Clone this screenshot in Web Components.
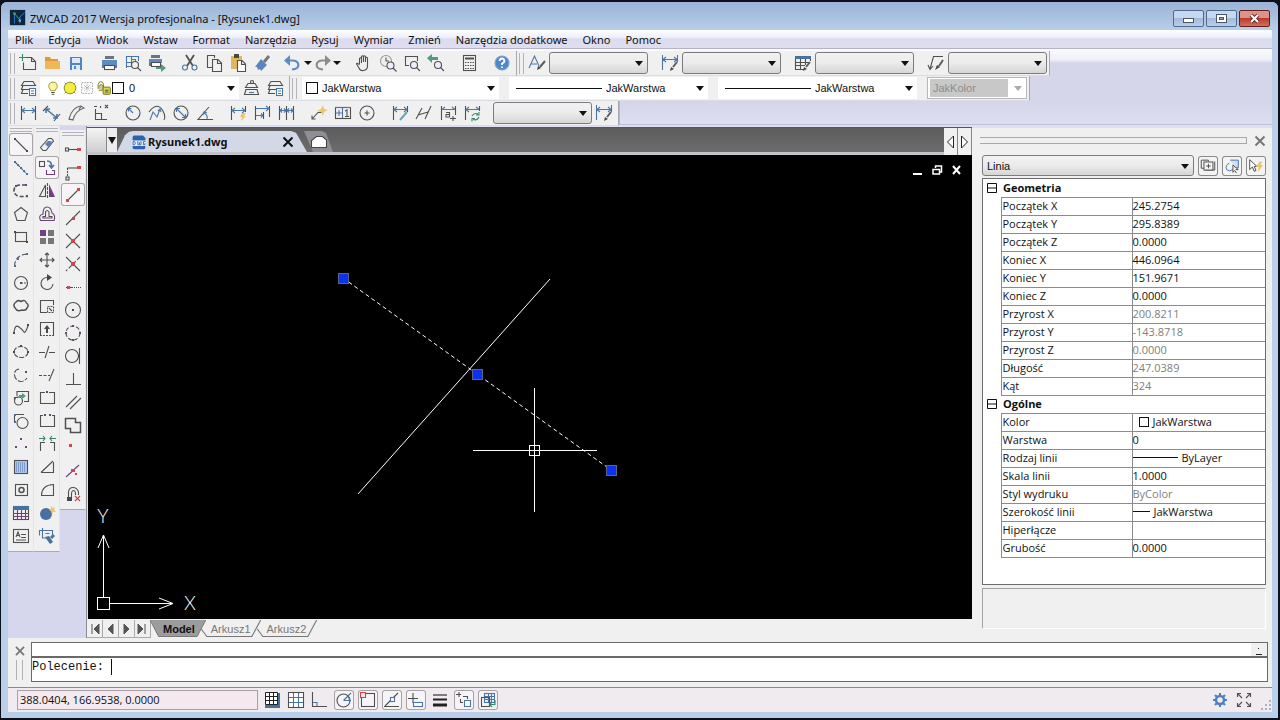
<!DOCTYPE html>
<html lang="pl">
<head>
<meta charset="utf-8">
<title>ZWCAD 2017</title>
<style>
  html, body { margin: 0; background: #10101c; }
  body { font: 12px/16px "Open Sans", "Noto Sans", sans-serif; color: #111; }
</style>
</head>
<body>
<cad-app></cad-app>
<script>
const ICONS = {
  logo: '<rect x="1" y="1" width="17" height="17" fill="#10243c" stroke="none"/><path d="M6 16V5M12 16V9L17 4" stroke="#2b78d0"/><path d="M6 5l6 7" stroke="#2fae8a"/><circle cx="6" cy="5" r="1.5" class="fg n"/><circle cx="12" cy="13" r="1.5" fill="#58a8f0" class="n"/>',
  new: '<path d="M5.500 9.500V16.500H17.500V8.500L13.500 4.500H8M13.500 4.500V8.500H17.500"/><path class="g" d="M1 4.500H8M4.500 1V8"/>',
  open: '<path class="n" fill="#dd9b35" d="M3 4h5l1 2h7v2H3z"/><path class="n" fill="#f0b75a" d="M3 8h15v8H3z"/>',
  save: '<path class="n" fill="#4f86c0" d="M4 4h11l1 1v12H4z"/><path class="n" fill="#dce9f6" d="M6 5h8v5H6zM6 12h8v5H6z"/><path class="n" fill="#4f86c0" d="M8 13h2v3H8z"/>',
  print: '<path class="n" fill="#6c7480" d="M6 3h9v3H6zM3 11h15v4h-2v-3H5v3H3z"/><path class="n" fill="#5b8cc4" d="M3 7h15v5H3z"/><rect x="5.500" y="12.500" width="10" height="4" fill="#fff"/>',
  preview: '<path class="b" d="M3.500 15V3.500H15.500V8M3.500 9.500H8M8.500 3V13.500H3.500M8.500 6.500H12.500V8"/><circle cx="12" cy="12" r="3.500"/><path d="M14.500 14.500L18 18"/>',
  publish: '<path class="n" fill="#5b8cc4" d="M2 6h13v4H2z"/><path class="n" fill="#6c7480" d="M4 2h9v3H4zM2 10h2v3H2z"/><rect x="4.500" y="9.500" width="9" height="4" fill="#fff"/><path class="n fg" d="M9 14h5v-3l5 4-5 4v-3H9z"/>',
  cut: '<path d="M6 2L13 13M14 2L7 13" stroke-width="1.800"/><circle class="b" cx="5" cy="14.500" r="2.500"/><circle class="b" cx="14.500" cy="14.500" r="2.500"/>',
  copy: '<path d="M8 14.500H3.500V2.500H10.500V5"/><path d="M8.500 6.500H14L17.500 10V18.500H8.500zM13.500 7V10.500H17"/>',
  paste: '<path class="n" fill="#e6b45c" d="M3 3h11v4H9v9H3z"/><path class="n fd" d="M6 1h5v4H6z"/><path d="M9.500 7.500H14L17.500 11V18.500H9.500zM13.500 8V11.500H17" fill="#fff"/>',
  brush: '<path d="M17 3L12 9" stroke-width="3" stroke="#777"/><path class="n" fill="#5b86bd" d="M9 6l6 6-6 6-1-2-2 1-1-3-2 0z"/>',
  undo: '<path d="M9 16.500C18 16 17 7 9 7.500H5" stroke="#5b8cc4" stroke-width="2.200"/><path class="n" fill="#5b8cc4" d="M1 7.500L7 2v11z"/>',
  redo: '<path d="M11 16.500C2 16 3 7 11 7.500H15" stroke="#8c8c8c" stroke-width="2.200"/><path class="n" fill="#8c8c8c" d="M19 7.500L13 2v11z"/>',
  hand: '<path d="M5.500 11V5.500q1-1.500 2 0V10 3.500q1-1.500 2 0V9 3.500q1-1.500 2 0V9 5q1-1.500 2 0V13q0 4-4 4.500Q6 18 5 15L2.500 11Q3 9 5.500 12"/>',
  zoomrt: '<circle cx="8" cy="8" r="5.500" stroke="#999"/><path d="M8 4.500V8H11"/><circle cx="12.500" cy="12.500" r="3.500" fill="#eef"/><path d="M15 15L18.500 18.500"/>',
  zoomwin: '<path d="M7 12.500H3.500V3.500H15.500V8"/><circle cx="12" cy="12" r="3.500" fill="#eef"/><path d="M14.500 14.500L18 18"/>',
  zoomprev: '<path class="n fg" d="M1 5l5-4v3h6v3H6v3z"/><circle cx="12" cy="12" r="3.500" fill="#eef"/><path d="M14.500 14.500L18 18"/>',
  calc: '<rect x="4.500" y="2.500" width="12" height="15"/><path d="M6 5.500H15" stroke-width="2"/><path d="M6 9.500H15M6 12.500H15M6 15.500H15" stroke-dasharray="1.500 1"/>',
  help: '<circle cx="10" cy="10" r="7" fill="#4f86c6" stroke="#7aa4d6"/><path d="M7.500 8Q8 5.500 10 5.500T12.500 8Q12.500 9.500 10 10.500V12M10 13.500V15" stroke="#fff" stroke-width="1.800"/>',
  tstyle: '<path class="b" d="M2 15L7.500 3L12 13M4 11H10"/><path class="k" d="M18 8L13 14"/><path class="n fd" d="M10 17l1-4 3 2z"/>',
  dstyle: '<path class="b" d="M2.500 2V17M17.500 2V9M3 6.500H17M6 4L3 6.500L6 9M14 4L17 6.500L14 9"/><path class="k" d="M17 9L13 14"/><path class="n fd" d="M10 18l1-4 3 2z"/>',
  tbstyle: '<path class="n fb" d="M2 3h16v3H2z"/><path d="M2.500 6V16.500H11M7.500 6V16M12.500 6V12M2 9.500H16M2 12.500H12M17.500 6V8"/><path class="k" d="M17 9L13 14"/><path class="n fd" d="M10 18l1-4 3 2z"/>',
  mlstyle: '<path d="M17 3.500H7.500L4 16M2 12L4 16.500L7 13"/><path class="k" d="M17 7L13 13"/><path class="n fd" d="M9 17l2-5 3 2z"/>',
  layers: '<path d="M6 3.500H15L17.500 7.500H3.500zM11 11.500H3.500L5 7.500M10 15.500H3.500L5 11.500"/><rect class="b" x="11.500" y="10.500" width="6" height="7" fill="#fff"/><path class="b" d="M13 13H16M13 15.500H16"/>',
  bulb: '<path d="M7.500 13Q7 11 5.500 9.500Q4.500 3.500 10 3.500T14.500 9.500Q13 11 12.500 13z" fill="#fbf6a0" stroke="#a89a3a"/><path d="M8 15H12M8.500 17H11.500"/>',
  sun: '<path d="M4 4L16 16M16 4L4 16" stroke="#8899aa"/><circle cx="10" cy="10" r="6.500" fill="#f2ee3a" stroke="#8c8c2a"/>',
  freeze: '<rect x="4" y="4" width="12" height="12" stroke="#aaa" stroke-dasharray="2 1"/><path d="M10 5V15M5 10H15M6.500 6.500L13.500 13.500M13.500 6.500L6.500 13.500" stroke="#999" stroke-dasharray="1 1"/>',
  lock: '<rect x="9" y="9" width="8" height="8" rx="1" fill="#dada3e" stroke="#77771a"/><path d="M3.500 11V6Q4 3 6.500 3T9.500 6V9M5.500 11V6.500L8 6.500V12.500H4" stroke="#77771a"/><path d="M11 12.500H15M11 14.500H15"/>',
  lmake: '<path d="M7 5.500H14L16.500 9.500H4.500zM5 11.500L3.500 16.500H17.500L16 11.500z"/><path class="b" d="M8 14.500H13"/><circle cx="11" cy="4" r="1.500"/>',
  linear: '<path d="M3.500 3V17M17.500 3V17"/><path class="b" d="M4 7.500H17M7 5L4 7.500L7 10M14 5L17 7.500L14 10"/>',
  aligned: '<path d="M1 8L6 3M12 18L18 11"/><path class="b" d="M4 6L15 15M4 10V6H8M11 15H15V11" stroke-width="1.600"/>',
  arclen: '<path d="M3 16Q6 4 15 3L18 5Q9 8 7 17zM3 16.500H7M15 3L13 7" stroke="#666"/>',
  ordinate: '<path d="M5.500 6V16.500H17M5.500 10.500H11.500V16"/><path d="M4 3.500H7M15 2L18 5M18 2L15 5M10.500 3V5"/>',
  radius: '<circle cx="10" cy="10" r="7"/><path class="b" d="M10 10L5.500 5.500M5.500 8.500V5.500H8.500"/>',
  jog: '<path d="M2 9Q10-2 16 8Q19 14 17 17"/><path class="b" d="M3 17L6 9L10 14L13 6M11 8L13 6L14 9"/>',
  diameter: '<circle cx="10" cy="10" r="7"/><path class="b" d="M5.500 5.500L14.500 14.500M5.500 9V5.500H9M11 14.500H14.500V11"/>',
  angular: '<path d="M14 4L3 16.500H18"/><path class="b" d="M9 10Q13 12 12 16M8 12L9 9L12 10"/>',
  quick: '<path d="M3.500 3V17M17.500 3V9"/><path class="b" d="M4 7.500H17M7 5L4 7.500L7 10M14 5L17 7.500L14 10"/><path class="n fo" d="M14 10h4l-2 3h2l-5 5 1-4h-2z"/>',
  baseline: '<path d="M3.500 3V17M17.500 3V14M11.500 9V16"/><path class="b" d="M4 5.500H17M14 3L17 5.500L14 8M4 12.500H11M9 10.500L11 12.500L9 14.500"/>',
  cont: '<path d="M3.500 3V17M10.500 3V17M17.500 3V17"/><path class="b" d="M4 7.500H17M6 5.500L4 7.500L6 9.500M8 5.500L10 7.500L8 9.500M13 5.500L11 7.500L13 9.500M15 5.500L17 7.500L15 9.500"/>',
  leader: '<path d="M3 16L9 9.500H13M3 12.500V16H6.500"/><path class="n fo" d="M14 2l1 4 4 1-4 2-1 4-2-4-4-1 4-2z"/>',
  tol: '<rect x="2.500" y="4.500" width="15" height="11"/><path class="b" d="M9.500 5V15M3 10H9M6 7V13"/><path d="M12 8L14 7V13.500M12 13.500H16"/><path class="b" d="M2 4.500H18"/>',
  center: '<circle cx="10" cy="10" r="7"/><path d="M10 7.500V12.500M7.500 10H12.500"/>',
  dedit: '<path d="M3.500 3V17M17.500 3V9"/><path class="b" d="M4 6.500H17M7 4L4 6.500L7 9M14 4L17 6.500L14 9"/><path d="M17 9L10 17" stroke="#6aa6b6" stroke-width="2"/>',
  oblique: '<path d="M2 16L8 5M11 16L17 3M4 12L14 9"/>',
  dtext: '<path d="M3.500 3V17M17.500 3V12"/><path class="b" d="M4 6.500H17M7 4L4 6.500M14 4L17 6.500"/><path d="M8 9.500H11.500V14H8V11.500H11M12 15.500H18M15 13V18"/>',
  dupd: '<path d="M3.500 3V17M17.500 3V8"/><path class="b" d="M4 6.500H17M7 4L4 6.500L7 9M14 4L17 6.500"/><path class="g" d="M10 13Q12 9.500 16 11M17 9V12H14M17 14Q15 18 11 16.500M10 18.500V15.500H13"/>',
  line: '<path d="M4 4L16 16"/><path class="n fd" d="M3 3h2v2H3zM15 15h2v2h-2z"/>',
  xline: '<path d="M4 4L16 16" stroke-dasharray="3 1"/><path class="n fb" d="M3 3h2v2H3zM6 6h2v2H6zM9 9h2v2H9zM12 12h2v2h-2zM15 15h2v2h-2z"/>',
  pline: '<path d="M15 4H8Q3 5 3 9.500T8 15.500H17" stroke-dasharray="4 2" stroke-width="1.600"/><path class="n fp" d="M14 3h2v2h-2zM15 14h2v2h-2zM4 4h2v2H4z"/>',
  polygon: '<path d="M10 3.500L16.500 8.500L14 16.500H6L3.500 8.500z"/>',
  rect: '<rect x="4.500" y="5.500" width="11" height="9"/><path class="n fd" d="M3 4h2v2H3zM15 14h2v2h-2z"/>',
  arc: '<path d="M3.500 16Q4 5 16 4" stroke-dasharray="5 2"/><path class="n fb" d="M3 15h2v2H3zM6 8h2v2H6zM15 3h2v2h-2z"/>',
  circle: '<circle cx="10" cy="10" r="6.500"/><path d="M10 10H17" stroke-dasharray="2 1"/><path class="n fp" d="M9 9h2v2H9z"/>',
  cloud: '<path d="M5 6Q7 3.500 10 5.500Q14 3 15.500 7Q18.500 9 16 12Q15 15 11 14Q6 16 4.500 12.500Q1 9 5 6z" stroke-width="1.500"/>',
  spline: '<path d="M3 13Q4 5 8 8T13 13T17 7"/><path class="n fd" d="M2 13h2v2H2zM16 5h2v2h-2z"/>',
  ellipse: '<ellipse cx="10" cy="10" rx="7" ry="5.500" stroke-dasharray="5 1.500"/><path class="n fd" d="M9 3h2v2H9zM2 9h2v2H2zM16 9h2v2h-2z"/>',
  earc: '<path d="M8 4Q3 5 3.500 10T9 16.500Q13 17 16 13" stroke-dasharray="6 1.500"/><path class="n fp" d="M14 6h2v2h-2z"/>',
  insert: '<path d="M6 8V3.500H17.500V13.500H13M3.500 12V9.500H7"/><circle cx="7.500" cy="13" r="4"/><path class="n fg" d="M8 7h3V5l4 3-4 3V9H8z"/>',
  block: '<path d="M3.500 11V3.500H13"/><circle cx="11.500" cy="12" r="5.500"/><path class="n fb" d="M3 3h2v2H3zM3 10h2v2H3z"/>',
  point: '<path class="n fp" d="M9 4h2v2H9zM4 12h2v2H4zM14 12h2v2h-2z"/>',
  hatch: '<rect x="3.500" y="3.500" width="13" height="13" fill="#b4c6f0"/><path class="b" d="M5 6H15M5 8H15M5 10H15M5 12H15M5 14H15" stroke-dasharray="1 1"/>',
  region: '<rect x="4.500" y="4.500" width="12" height="11"/><circle cx="10.500" cy="10" r="2.500" stroke-width="1.500"/>',
  table: '<rect x="2.500" y="3.500" width="15" height="13"/><path class="n fb" d="M2 3h16v4H2z"/><path class="p" d="M3 10.500H17M3 13.500H17M6.500 7V16M10.500 7V16M14.500 7V16"/>',
  mtext: '<rect x="2.500" y="3.500" width="15" height="13"/><path d="M5 11L7 6L9 11M5.500 9.500H8.500M10 8.500H15M10 11.500H15M5 14H15"/>',
  erase: '<path d="M3.500 12.500L11.500 3.500H14.500L16.500 6L9 15.500H6z"/><path class="n" fill="#5b7fc4" d="M11 6h3l1 2-4 4-3-3z"/>',
  copyo: '<rect x="2.500" y="3.500" width="5" height="5"/><path class="b" d="M10 3Q15 3 14.500 9M12 7L14.500 10L17 7" stroke-width="1.700"/><path class="p" d="M9.500 12V16.500H17.500V12.500H15"/>',
  mirror: '<path d="M8.500 4V15.500H2.500z"/><path class="n fp" d="M12 3v13h6z"/><path d="M10.500 2V18" stroke-dasharray="3 1"/>',
  offset: '<path class="p" d="M3.500 16.500Q1 11 6 10Q6 3 10 3T15 9Q19 11 17 16.500z"/><path d="M6 14V12.500H8.500V8Q10 5 12 8V12.500H15V14z"/>',
  array: '<path class="n fp" d="M3 3h6v6H3z"/><path class="n" fill="#777" d="M11 3h6v6h-6zM3 11h6v6H3zM11 11h6v6h-6z"/>',
  move: '<path d="M10 3V17M3 10H17M8 5L10 3L12 5M8 15L10 17L12 15M5 8L3 10L5 12M15 8L17 10L15 12"/>',
  rotate: '<path d="M10.500 4.500A6 6 0 1 0 16 11"/><path class="n fd" d="M10 1v7l5-3.500z"/>',
  scale: '<path d="M10 16.500H3.500V4.500H16.500V9"/><path d="M10.500 10.500H16.500V16.500H10.500z" stroke-dasharray="2 1"/><path d="M12 12L15 15"/>',
  stretch: '<path d="M3.500 16V3.500H16.500V16"/><path d="M3 16.500H17" stroke-dasharray="2 1"/><path class="n fd" d="M10 6l3 4h-2v4H9v-4H7z"/>',
  trim: '<path d="M12 4L8 16M2 10.500H8M12 10.500H18"/>',
  extend: '<path d="M17 4L12 16"/><path d="M2 10.500H13" stroke-dasharray="3 1.500"/>',
  breakp: '<path d="M8 4.500H3.500V15.500H17.500V4.500H12"/><path class="n fp" d="M9 3h2v2H9z"/>',
  break: '<path d="M6 4.500H3.500V15.500H17.500V4.500H15"/><path class="n fp" d="M7 3h2v2H7zM12 3h2v2h-2z"/>',
  join: '<path d="M3.500 17V8.500H8M17.500 17V8.500H13"/><path class="g" d="M2 4.500H8M6 2L8 4.500L6 7M19 4.500H13M15 2L13 4.500L15 7"/>',
  chamfer: '<path d="M4 15.500H16.500V5M4 15.500L16 4"/>',
  fillet: '<path d="M4 15.500H16.500V4.500Q5 5 4.500 15"/>',
  explode: '<circle cx="9" cy="11" r="6" class="fb n"/><path class="n fo" d="M14 3l2 2 2-1-1 3 2 2-3 0-1 3-1-4-2-1 2-1z"/>',
  matchp: '<path class="b" d="M5.500 2V12H10M2.500 4.500H15.500V9M2.500 4V9.500M8.500 7.500H12.500"/><path class="b" d="M17 9L14 12" stroke-width="3"/><path class="n fb" d="M8 11l4-1 4 6-3 2z"/>',
  s_from: '<path d="M5 10.500H15"/><rect x="2.500" y="9" width="3" height="3"/><path class="n fr" d="M14 9h4v3h-4z"/>',
  s_track: '<path d="M4.500 6H14"/><path d="M4.500 6V15" stroke-dasharray="2 1"/><rect x="3" y="15" width="3" height="3"/><path class="n fr" d="M14 4h4v3h-4z"/>',
  s_end: '<path d="M4 16L16 4"/><path class="n fr" d="M3 14h3v3H3zM14 3h3v3h-3z"/>',
  s_mid: '<path d="M3 17L17 3"/><path class="n fr" d="M9 9h3v3H9z"/>',
  s_int: '<path d="M3 3L17 17M17 3L3 17"/><path class="n fr" d="M8 8h4v4H8z"/>',
  s_app: '<path d="M3 3L17 17"/><path d="M17 3L3 17" stroke-dasharray="4 2"/><path class="n fr" d="M8 8h4v4H8z"/>',
  s_ext: '<path d="M3 10.500H9"/><path d="M9 10.500H18" stroke-dasharray="1 1"/><path class="n fr" d="M4 9h3v3H4z"/>',
  s_cen: '<circle cx="10" cy="10" r="7.500"/><path class="n fd" d="M9 9h2v2H9z"/>',
  s_quad: '<circle cx="10" cy="10" r="7" stroke-dasharray="4 2"/><path class="n fp" d="M9 2h2v2H9zM9 16h2v2H9zM2 9h2v2H2zM16 9h2v2h-2z"/>',
  s_tan: '<circle cx="9" cy="10" r="6.500"/><path d="M16.500 2V18"/><path class="n fd" d="M15 9h2v2h-2z"/>',
  s_perp: '<path d="M10.500 4V15.500M3 15.500H18"/>',
  s_par: '<path d="M3 15L14 4M7 17L18 6"/>',
  s_ins: '<path d="M2.500 3.500H12.500V7.500H17.500V17.500H7.500V13.500H2.500z" stroke-width="1.500"/>',
  s_node: '<path class="n fr" d="M6 6h3v3H6z"/>',
  s_near: '<path class="p" d="M3 16L16 4"/><path class="n fr" d="M8 8h4v3H8zM12 12h2v2h-2z"/>',
  s_none: '<path d="M5.500 15V8Q6 3.500 10 3.500T15.500 8V11M8.500 15V9Q9 6.500 10.500 6.500T12.500 9V11"/><path class="n fd" d="M4 13h5v4H4z"/><path class="r" d="M12 12L17 17M17 12L12 17"/>',
  snap: '<path class="n fb" d="M3 3h15v15H3z"/><path class="n" fill="#fff" d="M3 2h12v13H3z"/><path d="M3 6.500H15M3 10.500H15M7.500 3V15M11.500 3V15M3.500 2.500H15.500V14.500H3.500z" stroke-width="1" stroke="#222"/>',
  grid: '<rect x="2.500" y="2.500" width="15" height="15" fill="#fff"/><path class="b" d="M3 7.500H17M3 12.500H17M7.500 3V17M12.500 3V17"/>',
  ortho: '<path d="M2.500 2V16.500H17"/><path class="b" d="M3 12.500H7V16"/>',
  polar: '<circle cx="9.500" cy="10.500" r="6.500"/><path class="b" d="M9.500 10.500L17 3M10 10.500H17M14 7Q16 8 15 10"/>',
  osnap: '<rect x="3.500" y="3.500" width="13" height="13"/><path class="r" d="M2.500 2.500H7.500V7.500H2.500z" fill="#f3eef2"/>',
  otrack: '<path d="M2 16.500H17M3 16L16 3"/><rect class="b" x="8.500" y="7.500" width="4" height="4" fill="#fff"/>',
  dyn: '<path d="M7 3V13M2 8.500H12"/><rect class="b" x="7.500" y="12.500" width="9" height="4" fill="#fff"/>',
  lwt: '<path d="M3 5H17" stroke="#222"/><path d="M3 9.500H17" stroke="#222" stroke-width="2"/><path d="M3 15H17" stroke="#222" stroke-width="3"/>',
  cycle: '<path d="M5 2V7M2 4.500H7M6.500 9V12.500H9M9 6.500H13.500V9"/><rect class="b" x="10.500" y="10.500" width="6" height="6" fill="#fff"/>',
  anno: '<rect class="b" x="6.500" y="3.500" width="10" height="9"/><path class="b" d="M7 6.500H16M7 9.500H16M10.500 4V12M13.500 4V12"/><rect x="3.500" y="7.500" width="8" height="9"/><path class="g" d="M17 10V14.500H12M14 12L11.500 14.500L14 17"/>',
  gear: '<circle cx="10" cy="10" r="4" stroke="#4f80bd" stroke-width="2.500"/><path d="M10 3V5.500M10 14.500V17M3 10H5.500M14.500 10H17M5 5L7 7M13 13L15 15M15 5L13 7M7 13L5 15" stroke="#4f80bd" stroke-width="2"/>',
  full: '<path d="M3.500 7V3.500H7M13 3.500H16.500V7M16.500 13V16.500H13M7 16.500H3.500V13M4 4L8 8M16 4L12 8M16 16L12 12M4 16L8 12"/>',
  pick: '<path d="M6 12.500H2.500V3.500H10.500V5M17.500 5V14.500H7"/><rect x="5.500" y="5.500" width="10" height="9" fill="#f4f4f4"/><path d="M10.500 7.500V12.500M8 10H13"/>',
  selobj: '<path class="b" d="M8 3.500H17V12H13" fill="#cfe0f8"/><path class="b" d="M7 7Q2 9 4 14Q7 17 11 14"/><path d="M11 9V17L13 15L15 18M11 9L17 14H14" fill="#fff"/>',
  qsel: '<path d="M3 3V14L6 11L8 16L10 15L8 10.500H11z" fill="#fff"/><path class="n fo" d="M14 5h3l-2 4h3l-6 8 1-6h-3z"/>',
  dwg: '<path class="n" fill="#2d62ae" d="M3 2h12l3 3v12q0 2-2 2H4q-2 0-2-2V4q0-2 2-2z"/><path class="n" fill="#e8f0fb" d="M1 8h18v7H1z"/><path d="M2.500 9.500V13.500H4.500Q6.500 11.500 4.500 9.500zM8.500 9V13.500H12.500V9M10.500 10V13M18 9.500H15.500V13.500H17.500V11.500" stroke="#2d62ae"/>',
  doc: '<path d="M2.500 15.500V8.500L7.500 4.500H13.500L17.500 8V15.500z" fill="#fff" stroke="#444"/>',
  cross: '<path d="M5.500 5.500L14.500 14.500M14.500 5.500L5.500 14.500" stroke-width="2" stroke="currentColor"/>'
};

function define(name, html, setup) {
  const tpl = document.createElement('template');
  tpl.innerHTML = html;
  customElements.define(name, class extends HTMLElement {
    constructor() {
      super();
      this.attachShadow({ mode: 'open' }).append(tpl.content.cloneNode(true));
    }
    connectedCallback() { if (setup && !this.ready) { this.ready = true; setup.call(this, this.shadowRoot); } }
  });
}

customElements.define('cad-icon', class extends HTMLElement {
  static observedAttributes = ['name'];
  constructor() {
    super();
    this.attachShadow({ mode: 'open' }).innerHTML = `<style>
      :host { display: block; width: 20px; height: 20px; flex: none; }
      svg { display: block; width: 100%; height: 100%; fill: none; stroke: #505050; stroke-width: 1.1; }
      .b { stroke: #4a76a6; } .g { stroke: #2f8a68; } .p { stroke: #70407c; } .r { stroke: #d04048; }
      .k { stroke: #5c5c5c; stroke-width: 2; } .n { stroke: none; }
      .fb { fill: #47719f; } .fg { fill: #4f9c80; } .fp { fill: #743f80; } .fr { fill: #d2454f; } .fd { fill: #484848; } .fo { fill: #efc46a; }
    </style><svg viewBox="0 0 20 20" aria-hidden="true"></svg>`;
  }
  attributeChangedCallback(attr, old, value) {
    this.shadowRoot.querySelector('svg').innerHTML = ICONS[value] || '';
  }
});

define('tool-button', `<style>
  :host { display: block; width: 24px; height: 23px; flex: none; }
  :host([narrow]) { width: 20px; }
  button { display: grid; place-items: center; box-sizing: border-box; width: 100%; height: 100%; padding: 0; border: 0; border-radius: 3px; background: none; }
  :host([pressed]) button { box-shadow: inset 0 0 0 1px #a9a3a6; background: #f6f4f6; }
  :host([raised]) button { box-shadow: inset 0 0 0 1px #8a8a8a; background: #f4f4f4; }
  :host([raised]) cad-icon { width: 18px; height: 18px; }
</style><button type="button"><cad-icon></cad-icon></button>`, function (root) {
  root.querySelector('cad-icon').setAttribute('name', this.getAttribute('icon'));
  root.querySelector('button').setAttribute('aria-label', this.getAttribute('icon'));
});

define('caret-button', `<style>
  :host { display: block; width: 9px; height: 23px; flex: none; }
  button { display: grid; place-items: center; width: 100%; height: 100%; padding: 0; border: 0; background: none; }
  i { border: 4px solid transparent; border-top-color: #111; border-bottom: 0; }
</style><button type="button" aria-label="Lista"><i></i></button>`);

define('tool-gap', `<style>:host { display: block; width: 9px; flex: none; } :host([s]) { width: 2px; } :host([l]) { width: 10px; }</style>`);

define('tool-bar', `<style>
  :host { display: flex; align-items: center; box-sizing: border-box; flex: none; height: 25px; padding: 0 2px; background: #f0f0f0; border-right: 1px solid #a8a8b0; border-bottom: 1px solid #dcdce4; }
  .grip { width: 3px; height: 21px; margin-right: 1px; border: solid #b4b4b8; border-width: 0 1px; flex: none; }
  :host([vertical]) { flex-direction: column; height: auto; padding: 0 0 4px; align-self: flex-start; border-bottom-color: #a8a8b0; flex: 1 1 0; border-right-color: #e4e4ec; }
  :host([vertical]) .grip { width: 22px; height: 2px; margin: 2px 0 1px; border-width: 1px 0; }
</style><div class="grip"></div><slot></slot>`);

define('combo-box', `<style>
  :host { display: flex; position: relative; align-items: center; box-sizing: border-box; width: 99px; height: 22px; flex: none; font: 11px/16px "Liberation Sans", Arial, sans-serif; background: #fff; }
  :host([kind=button]) { border: 1px solid #7c7c7c; border-radius: 3px; background: linear-gradient(#f2f2f2, #ebebeb 50%, #d6d6d6); }
  :host([kind=off]) { border: 1px solid #b8b8b8; color: #8c8c8c; }
  .lead { display: flex; align-items: center; flex: none; padding-left: 4px; }
  select { appearance: none; flex: 1; min-width: 0; align-self: stretch; border: 0; padding: 0 18px 0 0; background: none; color: inherit; font: inherit; }
  :host([kind=off]) select { opacity: 1; background: #c8c8c8; margin: 1px 18px 1px 2px; padding-left: 3px; }
  :host([kind=off]) .lead { display: none; }
  .arrow { position: absolute; right: 4px; top: 50%; margin-top: -2px; border: 4px solid transparent; border-top: 5px solid #111; border-bottom: 0; pointer-events: none; }
  :host([kind=off]) .arrow { border-top-color: #aaa; }
</style><span class="lead"><slot></slot></span><select><option></option></select><i class="arrow"></i>`, function (root) {
  const s = root.querySelector('select');
  s.options[0].textContent = this.getAttribute('value') || '';
  s.setAttribute('aria-label', this.getAttribute('label') || 'Styl');
  s.disabled = this.getAttribute('kind') === 'off';
});

define('color-swatch', `<style>:host { display: inline-block; box-sizing: border-box; width: 12px; height: 12px; flex: none; margin: 0 4px; border: 1px solid #111; background: #fff; } :host([small]) { width: 10px; height: 10px; }</style>`);

define('title-bar', `<style>
  :host { display: flex; align-items: center; height: 28px; padding: 0 3px 0 2px; background: linear-gradient(#9cb3d6, #a7c1de 50%, #b8cfeb); }
  cad-icon { width: 18px; height: 18px; margin-top: 4px; }
  h1 { flex: 1; margin: 5px 0 0 3px; font: 11px/16px "Noto Sans", sans-serif; }
  button { display: grid; place-items: center; box-sizing: border-box; width: 31px; height: 17px; margin: 5px 0 0 2px; padding: 0; border: 1px solid #51698f; border-radius: 2px; background: linear-gradient(#c6d8ef 50%, #a2b9d8 50%, #b9d0ec); }
  .close { border-color: #6b1c1c; background: linear-gradient(#dd9488 50%, #bd3a2a 50%, #d07060); }
  svg { display: block; }
</style><cad-icon name="logo"></cad-icon><h1>ZWCAD 2017 Wersja profesjonalna - [Rysunek1.dwg]</h1>
<button type="button" aria-label="Minimalizuj"><svg width="13" height="11"><rect x="1.500" y="5.500" width="10" height="4" fill="#fff" stroke="#4c5568"/></svg></button>
<button type="button" aria-label="Przywróć"><svg width="13" height="11"><rect x="1.500" y="1.500" width="10" height="8" fill="#fff" stroke="#4c5568"/><rect x="4.500" y="4.500" width="4" height="2" fill="#9ab" stroke="#4c5568"/></svg></button>
<button type="button" class="close" aria-label="Zamknij"><svg width="13" height="11"><path d="M3 2L10 9M10 2L3 9" stroke="#5c3030" stroke-width="4"/><path d="M3 2L10 9M10 2L3 9" stroke="#fff" stroke-width="2"/></svg></button>`);

define('menu-bar', `<style>
  :host { display: block; border-bottom: 1px solid #b4b4c4; background: linear-gradient(#fff, #eef0fa 40%, #dcdcee 50%, #dedeef); }
  nav { display: flex; gap: 15px; height: 18px; padding: 2px 7px 0; box-sizing: border-box; }
  button { padding: 0; border: 0; background: none; color: inherit; font: 11px/16px "Noto Sans", sans-serif; }
</style><nav></nav>`, function (root) {
  root.querySelector('nav').innerHTML = ['Plik', 'Edycja', 'Widok', 'Wstaw', 'Format', 'Narzędzia', 'Rysuj', 'Wymiar', 'Zmień', 'Narzędzia dodatkowe', 'Okno', 'Pomoc'].map(t => `<button type="button">${t}</button>`).join('');
});

const tools = list => list.split(' ').map(n => {
  if (n === '|') return '<tool-gap></tool-gap>';
  if (n === '.') return '<tool-gap s></tool-gap>';
  if (n === '^') return '<caret-button></caret-button>';
  const name = n.replace(/[*~]/, '');
  return `<tool-button icon="${name}"${n.includes('*') ? ' pressed' : ''}${n.includes('~') ? ' narrow' : ''}></tool-button>`;
}).join('');

define('tool-rows', `<style>
  :host { display: block; padding-top: 2px; background: linear-gradient(#fafaff, #f0f0fa 14%, #d6d6ea 18%, #d6d6ea 70%, #dedef4); }
  .row { display: flex; }
  .layer { width: 199px; } .prop { width: 197px; } .wide { width: 199px; }
  .off { width: 100px; }
  .layer cad-icon { width: 18px; height: 18px; margin: 0 -1px 0 0; }
  .layer color-swatch { margin: 0 5px 0 0; }
  .ln { display: block; width: 86px; height: 1px; margin: 0 4px 0 3px; background: #111; }
  .rest { flex: 1; box-sizing: border-box; height: 24px; border-left: 1px solid #b8b8cc; border-bottom: 1px solid #c0c0d4; }
</style>
<div class="row">
  <tool-bar>${tools('new open save | print preview publish | cut copy paste brush | undo~ ^ redo~ ^ | . hand zoomrt zoomwin zoomprev | calc | help')}</tool-bar>
  <tool-bar>${['tstyle', 'dstyle', 'tbstyle', 'mlstyle'].map(n => `<tool-button icon="${n}"></tool-button><combo-box kind="button" label="${n}"></combo-box>`).join('<tool-gap l></tool-gap>')}</tool-bar>
</div>
<div class="row">
  <tool-bar><tool-button icon="layers"></tool-button><combo-box class="layer" value="0" label="Warstwa"><cad-icon name="bulb"></cad-icon><cad-icon name="sun"></cad-icon><cad-icon name="freeze"></cad-icon><cad-icon name="lock"></cad-icon><color-swatch></color-swatch></combo-box><tool-button icon="lmake"></tool-button><tool-button icon="layers"></tool-button></tool-bar>
  <tool-bar><tool-gap s></tool-gap><tool-gap s></tool-gap><combo-box class="prop" value="JakWarstwa" label="Kolor"><color-swatch style="margin-left:0"></color-swatch></combo-box><tool-gap l></tool-gap><combo-box class="wide" value="JakWarstwa" label="Rodzaj linii"><i class="ln"></i></combo-box><tool-gap l></tool-gap><combo-box class="wide" value="JakWarstwa" label="Szerokość linii"><i class="ln"></i></combo-box><tool-gap l></tool-gap><combo-box class="off" kind="off" value="JakKolor" label="Styl wydruku"></combo-box></tool-bar>
</div>
<div class="row">
  <tool-bar>${tools('linear aligned arclen ordinate | radius jog diameter angular | quick baseline cont | leader tol center | dedit oblique dtext dupd |')}<combo-box kind="button" label="Styl wymiarowania"></combo-box><tool-button icon="dstyle"></tool-button></tool-bar>
  <div class="rest"></div>
</div>`);

define('tool-dock', `<style>
  :host { display: flex; align-items: flex-start; box-sizing: border-box; width: 79px; flex: none; background: #d6d6ec; border-right: 1px solid #8c8c94; }
  .snap { margin-top: 4px; }
</style>
<tool-bar vertical>${tools('line* xline pline polygon rect arc circle cloud spline ellipse earc insert block point hatch region table mtext')}</tool-bar>
<tool-bar vertical>${tools('erase copyo* mirror offset array move rotate scale stretch trim extend breakp break join chamfer fillet explode matchp')}</tool-bar>
<tool-bar vertical class="snap">${tools('s_from s_track s_end* s_mid s_int s_app s_ext s_cen s_quad s_tan s_perp s_par s_ins s_node s_near s_none')}</tool-bar>`);

define('document-tabs', `<style>
  :host { display: flex; align-items: stretch; box-sizing: border-box; height: 28px; border-top: 1px solid #555; border-bottom: 3px solid #c4c4c8; background: linear-gradient(#5c5c5c, #6c6c6c); }
  .pad { width: 19px; background: linear-gradient(#f4f4f4, #cfcfcf); }
  button { display: grid; place-items: center; padding: 0; border: 0; background: none; color: inherit; }
  .list { width: 11px; background: #ececec; border-left: 1px solid #888; }
  .list i { border: 4px solid transparent; border-top: 7px solid #111; border-bottom: 0; }
  .tab { display: flex; align-items: center; width: 190px; box-sizing: border-box; padding: 0 7px 0 14px; margin-top: 3px; background: #d2d8e6; clip-path: polygon(0 100%, 8px 20%, 12px 4%, 16px 0, 174px 0, 179px 8%, 190px 100%); }
  .tab b { flex: 1; font: bold 11px/16px "Noto Sans", sans-serif; }
  .tab cad-icon { width: 16px; height: 16px; margin-right: 1px; }
  .close { width: 20px; height: 20px; margin-right: 2px; }
  .tab .close cad-icon { width: 20px; height: 20px; margin: 0; }
  .new { width: 29px; margin: 3px 0 0 -3px; background: #8d8f94; clip-path: polygon(0 0, 18px 0, 22px 10%, 29px 100%, 9px 100%); }
  .fill { flex: 1; }
  .arr { width: 14px; margin-bottom: -3px; border: 1px solid #888; border-width: 0 1px 0 0; background: #f0f0f0; }
</style>
<span class="pad"></span><button class="list" type="button" aria-label="Lista rysunków"><i></i></button>
<div class="tab"><cad-icon name="dwg"></cad-icon><b>Rysunek1.dwg</b><button class="close" type="button" aria-label="Zamknij"><cad-icon name="cross"></cad-icon></button></div>
<button class="new" type="button" aria-label="Nowy"><cad-icon name="doc"></cad-icon></button><span class="fill"></span>
<button class="arr" type="button" aria-label="Wstecz"><svg width="9" height="14"><path d="M7.500 1V13L1.500 7z" fill="#fff" stroke="#222"/></svg></button>
<button class="arr" type="button" aria-label="Dalej"><svg width="9" height="14"><path d="M1.500 1V13L7.500 7z" fill="#fff" stroke="#222"/></svg></button>`);

define('drawing-area', `<style>
  :host { display: block; position: relative; flex: 1; min-height: 460px; margin-left: 1px; background: #000; overflow: hidden; }
  svg { display: block; position: absolute; fill: none; stroke: #fff; }
  .model { inset: 0; width: 100%; height: 100%; }
  .ucs { left: 0; bottom: 0; }
  .ucs text { font: 300 19px Lato, sans-serif; fill: #fff; stroke: none; text-anchor: middle; }
  .win { top: 8px; right: 9px; }
</style>
<svg class="model"><path d="M270 339L462 124"/><path d="M255 123L523 315" stroke-dasharray="4 3"/>
<path d="M446.500 233V357M385 295.500H509" shape-rendering="crispEdges"/><rect x="441.500" y="290.500" width="10" height="10"/>
<g fill="#0a32f0" stroke="#5a648c"><rect x="250.500" y="118.500" width="10" height="10"/><rect x="384.500" y="214.500" width="10" height="10"/><rect x="518.500" y="310.500" width="10" height="10"/></g></svg>
<svg class="ucs" width="120" height="119"><rect x="9.500" y="97.500" width="12" height="12"/><path d="M15.500 97V35M10 48L15.500 35L21 48M22 103.500H85M71 98L85 103.500L71 109"/><text x="15" y="23">Y</text><text x="102" y="110">X</text></svg>
<svg class="win" width="50" height="14" stroke-width="2"><path d="M0 11H9M40 3L47 11M47 3L40 11"/><path d="M20 6.500H26.500V11H20zM22.500 5V3H28.500V9H26.500" stroke-width="1.500"/></svg>`);

define('layout-tabs', `<style>
  :host { display: flex; height: 19px; box-sizing: border-box; padding-top: 1px; background: #f0f0f0; font: 11px/16px "Liberation Sans", Arial, sans-serif; color: #777; }
  button { padding: 0; border: 0; background: none; color: inherit; font: inherit; }
  .nav { display: grid; place-items: center; width: 16px; box-sizing: border-box; border-right: 1px solid #aaa; border-bottom: 1px solid #aaa; }
  .tab { position: relative; padding: 0 8px; height: 17px; }
  .tab svg { position: absolute; left: -5px; top: 0; width: calc(100% + 8px); height: 17px; fill: none; stroke: #777; }
  .tab span { position: relative; }
  .on { margin-left: 4px; color: #111; font-weight: bold; }
  .on svg { fill: #9c9c9c; }
</style>
${['M4 1V11M11 1L6 6L11 11z', 'M9 1L4 6L9 11z', 'M4 1L9 6L4 11z', 'M9 1V11M2 1L7 6L2 11z'].map((d, i) => `<button class="nav" type="button" aria-label="Arkusz ${i + 1}"><svg width="13" height="12"><path d="${d}" fill="#555" stroke="#555"/></svg></button>`).join('')}
<button type="button" class="tab on"><svg viewBox="0 0 58 17" preserveAspectRatio="none"><path d="M0 0L9 16.500H49L58 0"/></svg><span>Model</span></button>
<button type="button" class="tab"><svg viewBox="0 0 58 17" preserveAspectRatio="none"><path d="M3 9L8 16.500H49L57 0"/></svg><span>Arkusz1</span></button>
<button type="button" class="tab"><svg viewBox="0 0 58 17" preserveAspectRatio="none"><path d="M3 9L8 16.500H49L57 0"/></svg><span>Arkusz2</span></button>`);

define('property-panel', `<style>
  :host { display: flex; flex-direction: column; box-sizing: border-box; width: 300px; flex: none; margin-top: 2px; padding: 0 6px 9px 10px; background: #f0f0f0; font-size: 11px; }
  .head { display: flex; align-items: center; height: 25px; margin-left: -2px; }
  .head i { flex: 1; height: 5px; border: 1px solid #a8a8a8; border-left: 0; }
  .head button { width: 20px; height: 20px; margin: 0 -4px 0 3px; padding: 0; border: 0; background: none; color: #777; }
  .pick { display: flex; align-items: center; gap: 4px; height: 25px; }
  combo-box { flex: 1; width: auto; height: 21px; }
  .pick tool-button { width: 20px; height: 20px; }
  .list { flex: 1; border: 1px solid #6c6c6c; background: #fff; }
  table { width: 100%; border-collapse: collapse; table-layout: fixed; }
  th, td { box-sizing: border-box; height: 18px; padding: 0; border: 1px solid #8c8c8c; border-right: 0; font-weight: normal; text-align: left; line-height: 16px; white-space: nowrap; }
  .side { width: 18px; border-left: 0; border-top: 0; border-bottom: 0; }
  .name { width: 131px; padding-left: 1px; }
  .value { vertical-align: top; }
  .group th { padding-left: 2px; border-left: 0; border-top: 0; font-weight: bold; }
  .group .side { border: 0; }
  .group svg { display: block; margin-left: 4px; }
  .ro { color: #808080; }
  .cell { display: flex; align-items: center; }
  .cell i { height: 1px; background: #111; margin-right: 4px; }
  .note { height: 39px; margin-top: 3px; border: 1px solid #a4a4a4; border-right-color: #fff; border-bottom-color: #fff; }
</style>
<div class="head"><i></i><button type="button" aria-label="Zamknij"><cad-icon name="cross"></cad-icon></button></div>
<div class="pick"><combo-box kind="button" value="Linia" label="Obiekt"></combo-box><tool-button raised icon="pick"></tool-button><tool-button raised icon="selobj"></tool-button><tool-button raised icon="qsel"></tool-button></div>
<div class="list"><table><colgroup><col style="width:18px"><col style="width:131px"><col></colgroup><tbody></tbody></table></div>
<div class="note"></div>`, function (root) {
  const rows = [['Geometria'], ['Początek X', '245.2754'], ['Początek Y', '295.8389'], ['Początek Z', '0.0000'], ['Koniec X', '446.0964'], ['Koniec Y', '151.9671'], ['Koniec Z', '0.0000'],
    ['Przyrost X', '200.8211', 1], ['Przyrost Y', '-143.8718', 1], ['Przyrost Z', '0.0000', 1], ['Długość', '247.0389', 1], ['Kąt', '324', 1],
    ['Ogólne'], ['Kolor', '<div class="cell"><color-swatch small style="margin-left:6px"></color-swatch>JakWarstwa</div>'], ['Warstwa', '0'],
    ['Rodzaj linii', '<div class="cell"><i style="width:45px"></i>ByLayer</div>'], ['Skala linii', '1.0000'], ['Styl wydruku', 'ByColor', 1],
    ['Szerokość linii', '<div class="cell"><i style="width:17px"></i>JakWarstwa</div>'], ['Hiperłącze', ''], ['Grubość', '0.0000']];
  root.querySelector('tbody').innerHTML = rows.map(r => r.length === 1
    ? `<tr class="group"><td class="side"><svg width="10" height="10"><path d="M.5 .5H9.500V9.500H.5zM.5 5H9.500" fill="none" stroke="#111"/></svg></td><th colspan="2" scope="colgroup">${r[0]}</th></tr>`
    : `<tr><td class="side"></td><th class="name" scope="row">${r[0]}</th><td class="value${r[2] ? ' ro' : ''}">${r[1]}</td></tr>`).join('');
});

define('command-line', `<style>
  :host { display: flex; box-sizing: border-box; padding: 4px 4px 5px 0; background: #f0f0f0; border-bottom: 1px solid #8a8a8a; }
  .side { display: flex; flex-direction: column; align-items: center; width: 23px; flex: none; color: #777; }
  .side button { width: 18px; height: 18px; padding: 0; border: 0; background: none; color: inherit; }
  .side cad-icon { width: 18px; height: 18px; }
  .side i { width: 5px; height: 20px; border: solid #b0b0b0; border-width: 0 1px; }
  .box { flex: 1; border: 1px solid #6a6a6a; background: #fff; }
  .log { display: flex; justify-content: flex-end; height: 13px; border-bottom: 2px solid #6a6a6a; }
  .log i { display: flex; align-items: flex-end; justify-content: center; width: 16px; background: #f0f0f0; }
  .line { display: flex; align-items: center; height: 23px; font: 12px/16px "Liberation Mono", "Courier New", monospace; }
  .line label { flex: none; white-space: pre; padding-bottom: 6px; }
  input { flex: 1; min-width: 0; height: 16px; margin: 0 0 6px 0; border: 0; border-left: 1px solid #111; outline: 0; padding: 0; font: inherit; }
</style>
<div class="side"><button type="button" aria-label="Zamknij"><cad-icon name="cross"></cad-icon></button><i></i></div>
<div class="box"><div class="log"><i><svg width="6" height="10"><path d="M2 2h1v1H2zM0 8h6v1H0z" fill="#222"/></svg></i></div><div class="line"><label for="cmd">Polecenie: </label><input id="cmd" type="text"></div></div>`);

define('status-bar', `<style>
  :host { display: flex; align-items: center; height: 24px; padding: 0 14px 0 9px; background: #f0ebef; position: relative; }
  output { box-sizing: border-box; width: 241px; height: 20px; margin-right: 4px; padding-left: 2px; border: 1px solid #a8a0a6; font-size: 11px; line-height: 17px; background: #f3e9ee; }
  tool-button { width: 20px; height: 20px; margin-right: 4px; }
  .fill { flex: 1; }
  svg { position: absolute; right: 0; bottom: 1px; }
</style><output>388.0404, 166.9538, 0.0000</output>${tools('snap grid ortho polar* osnap* otrack* dyn* lwt cycle* anno*')}<span class="fill"></span>${tools('gear full')}
<svg width="11" height="11" fill="#b4b0b8"><path d="M8 0h2v2H8zM8 4h2v2H8zM8 8h2v2H8zM4 4h2v2H4zM4 8h2v2H4zM0 8h2v2H0z"/></svg>`);

define('cad-app', `<style>
  :host { display: flex; flex-direction: column; box-sizing: border-box; min-height: 100vh; padding: 2px 2px 2px 1px; }
  .frame { display: flex; flex: 1; flex-direction: column; box-sizing: border-box; padding: 0 6px 6px 7px; border-radius: 6px 6px 0 0; background: #b9cfea; }
  title-bar { margin: 0 -6px 0 -7px; padding-left: 8px; padding-right: 8px; border-radius: 6px 6px 0 0; }
  .work { display: flex; flex: 1; background: #dedef4; }
  .doc { display: flex; flex: 1; flex-direction: column; min-width: 0; margin-top: 1px; }
</style>
<div class="frame"><title-bar></title-bar><menu-bar></menu-bar><tool-rows></tool-rows>
<div class="work"><tool-dock></tool-dock><div class="doc"><document-tabs></document-tabs><drawing-area></drawing-area><layout-tabs></layout-tabs></div><property-panel></property-panel></div>
<command-line></command-line><status-bar></status-bar></div>`);
</script>
</body>
</html>
